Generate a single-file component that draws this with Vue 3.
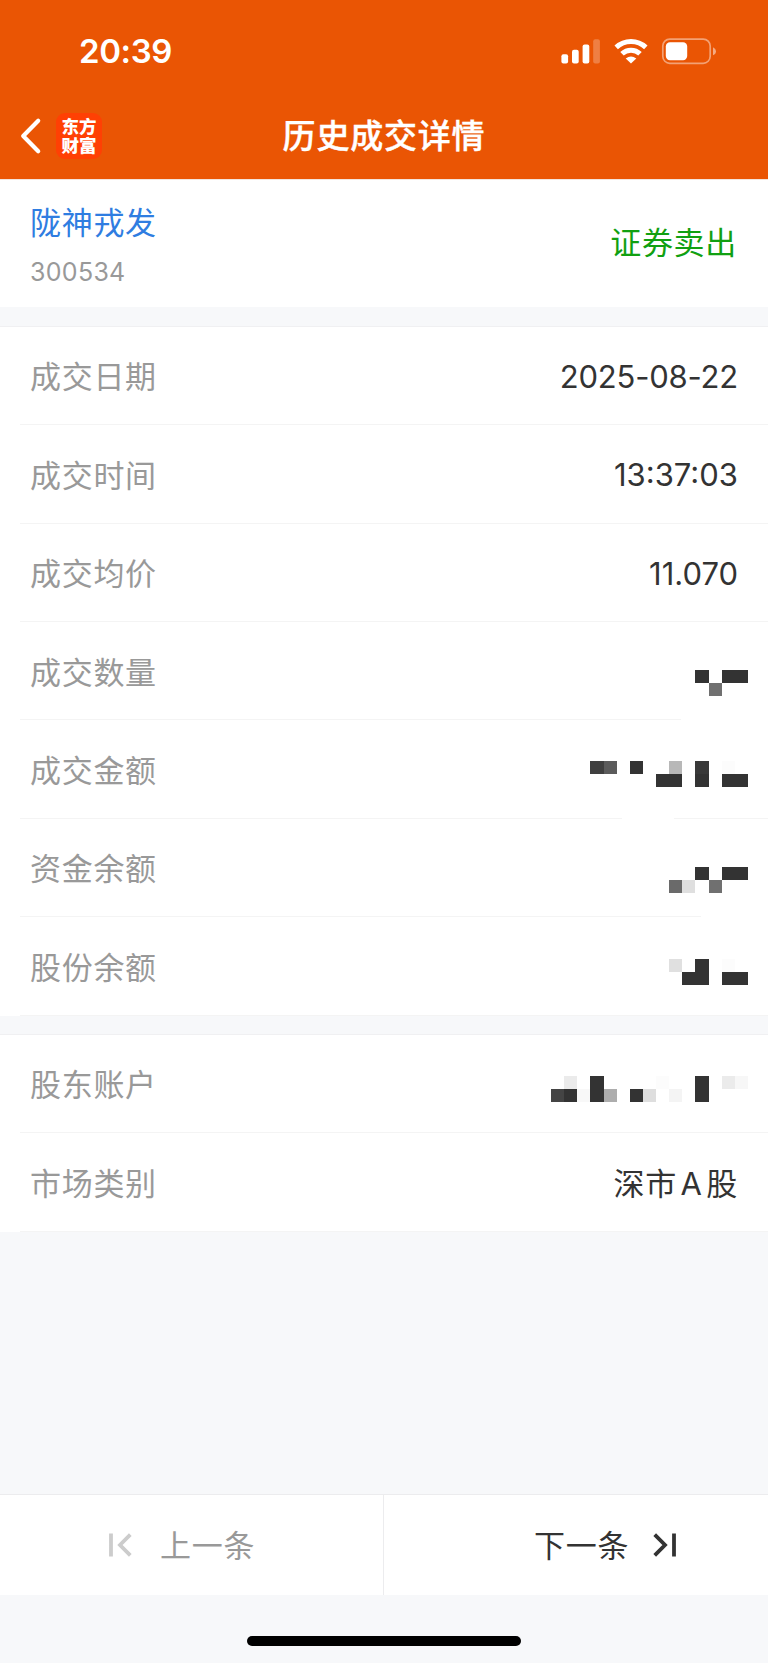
<template>
  <div class="page">
    <header class="header">
      <div class="status-bar">
        <span class="status-time">20:39</span>
        <svg class="status-icons" width="156" height="28" viewBox="0 0 156 28" fill="#fff">
          <rect x="1.4" y="17.3" width="6.7" height="9.2" rx="2" />
          <rect x="12" y="12.7" width="6.7" height="13.8" rx="2" />
          <rect x="22.6" y="7.4" width="6.7" height="19.1" rx="2" />
          <rect x="33.2" y="2.2" width="6.7" height="24.3" rx="2" opacity="0.25" />
          <g fill="none" stroke="#fff" stroke-width="5">
            <path d="M56.2 10.4 A21.6 21.6 0 0 1 85.8 10.4" />
            <path d="M62 16.8 A13 13 0 0 1 80 16.8" />
          </g>
          <path d="M71 26.6 L65.7 21.4 Q71 17.4 76.3 21.4 Z" />
          <rect x="102.8" y="2.1" width="47.4" height="24.2" rx="7" fill="none" stroke="#fff" stroke-width="1.7" opacity="0.45" />
          <rect x="105.8" y="5.2" width="21.4" height="18" rx="4.2" />
          <path d="M153 10.2 Q156 11.5 156 14.2 Q156 17 153 18.3 Z" opacity="0.5" />
        </svg>
      </div>
      <div class="nav-bar">
        <div class="nav-left">
          <svg class="back-icon" width="22" height="38" viewBox="0 0 22 38" fill="none" stroke="#fff" stroke-width="4.2" stroke-linecap="round" stroke-linejoin="round">
            <path d="M18.2 3.8 L3.2 19 L18.2 34.2" />
          </svg>
          <div class="logo"><span>东方</span><span>财富</span></div>
        </div>
        <h1 class="title">历史成交详情</h1>
      </div>
    </header>

    <section class="summary">
      <div class="stock">
        <span class="stock-name">陇神戎发</span>
        <span class="stock-code">300534</span>
      </div>
      <span class="direction">证券卖出</span>
    </section>

    <section v-for="(group, index) in groups" :key="index" class="group">
      <div v-for="row in group" :key="row.label" class="row" :class="row.line">
        <span class="label">{{ row.label }}</span>
        <span v-if="row.value" class="value" :class="row.type">{{ row.value }}</span>
        <svg
          v-else
          class="mosaic"
          :style="{ marginTop: row.offset + 'px' }"
          :width="CELL * 15"
          :height="CELL * 2"
          shape-rendering="crispEdges"
        >
          <rect
            v-for="([col, line, color], i) in row.cells"
            :key="i"
            :x="(14 - col) * CELL"
            :y="line * CELL"
            :width="CELL"
            :height="CELL"
            :fill="color"
          />
        </svg>
      </div>
    </section>

    <footer class="footer">
      <div class="pager">
        <button class="pager-btn prev" disabled>
          <svg width="24" height="24" viewBox="0 0 24 24" fill="none" stroke="#ccc" stroke-width="3.8">
            <path d="M3 0.5 V23.5 M22.3 1.7 L12 12 L22.3 22.3" />
          </svg>
          <span class="pager-text">上一条</span>
        </button>
        <button class="pager-btn next">
          <span class="pager-text">下一条</span>
          <svg width="24" height="24" viewBox="0 0 24 24" fill="none" stroke="#333" stroke-width="3.8">
            <path d="M21 0.5 V23.5 M1.7 1.7 L12 12 L1.7 22.3" />
          </svg>
        </button>
      </div>
      <div class="home-indicator"></div>
    </footer>
  </div>
</template>

<script setup>
// Size of one mosaic block
const CELL = 13.13

const DARK = '#333333'

// cells: [column counted from the right, line, color]
const groups = [
  [
    { label: '成交日期', value: '2025-08-22', type: 'date' },
    { label: '成交时间', value: '13:37:03', type: 'time' },
    { label: '成交均价', value: '11.070', type: 'price' },
    {
      label: '成交数量',
      line: 'cut-amount',
      offset: 47.4,
      cells: [[3, 0, DARK], [1, 0, DARK], [0, 0, DARK], [2, 1, '#707070']]
    },
    {
      label: '成交金额',
      line: 'cut-money',
      offset: 40.7,
      cells: [
        [11, 0, '#3f3f3f'], [10, 0, '#5b5b5b'], [8, 0, DARK], [5, 0, '#b8b8b8'],
        [3, 0, '#393939'], [1, 0, '#fcfcfc'], [6, 1, DARK], [5, 1, DARK],
        [3, 1, DARK], [1, 1, DARK], [0, 1, DARK]
      ]
    },
    {
      label: '资金余额',
      line: 'cut-balance',
      offset: 47.4,
      cells: [
        [3, 0, DARK], [1, 0, DARK], [0, 0, DARK],
        [5, 1, '#6a6a6a'], [4, 1, '#dfdfdf'], [2, 1, '#707070']
      ]
    },
    {
      label: '股份余额',
      offset: 41.1,
      cells: [
        [5, 0, '#e0e0e0'], [3, 0, DARK], [1, 0, '#fcfcfc'],
        [4, 1, DARK], [3, 1, DARK], [1, 1, DARK], [0, 1, DARK]
      ]
    }
  ],
  [
    {
      label: '股东账户',
      offset: 40.9,
      cells: [
        [13, 0, '#ebebeb'], [11, 0, DARK], [6, 0, '#fcfcfc'], [3, 0, DARK],
        [1, 0, '#ebebeb'], [0, 0, '#f7f7f7'], [14, 1, '#444444'], [13, 1, DARK],
        [12, 1, '#f8f8f8'], [11, 1, DARK], [10, 1, '#adadad'], [8, 1, DARK],
        [7, 1, '#dedede'], [5, 1, '#f4f4f4'], [3, 1, DARK]
      ]
    },
    { label: '市场类别', value: '深市 A 股', type: 'market' }
  ]
]
</script>

<style>
body {
  background: #f7f8fa;
}
</style>

<style scoped>
.page {
  display: flex;
  flex-direction: column;
  width: 768px;
  height: 1663px;
  overflow: hidden;
  background: #f7f8fa;
  font-family: Inter, 'Noto Sans CJK SC', sans-serif;
  color: #333;
  white-space: nowrap;
}

.header {
  display: flex;
  flex-direction: column;
  flex: none;
  height: 179px;
  background: #ea5504;
  color: #fff;
}

.status-bar {
  display: flex;
  align-items: center;
  justify-content: space-between;
  height: 102px;
  padding: 0 52px 0 79px;
}

.status-time {
  font-size: 33px;
  font-weight: 600;
  letter-spacing: -0.4px;
}

.nav-bar {
  display: grid;
  grid-template-columns: 1fr auto 1fr;
  align-items: center;
  height: 68px;
}

.nav-left {
  display: flex;
  align-items: center;
  gap: 14px;
  padding-left: 20px;
}

.logo {
  display: flex;
  flex-direction: column;
  justify-content: center;
  align-items: center;
  width: 46px;
  height: 46px;
  border-radius: 9px;
  background: #ff4004;
  font-size: 17.5px;
  font-weight: 900;
  line-height: 19px;
}

.title {
  margin: 0;
  font-size: 33px;
  font-weight: 500;
  letter-spacing: 0.8px;
  line-height: 48px;
  -webkit-text-stroke: 0.4px #fff;
}

.summary {
  display: flex;
  align-items: center;
  justify-content: space-between;
  box-sizing: border-box;
  flex: none;
  height: 128px;
  padding: 0 31px 0 30px;
  border-top: 1px solid #f3e4dc;
  background: #fff;
}

.stock {
  display: flex;
  flex-direction: column;
  padding-top: 8px;
}

.stock-name {
  color: #2f7de1;
  font-size: 31px;
  letter-spacing: 0.7px;
  line-height: 48px;
}

.stock-code {
  padding-top: 1px;
  color: #999;
  font-size: 25px;
  letter-spacing: 0.3px;
  line-height: 48px;
}

.direction {
  padding-bottom: 2px;
  color: #11a011;
  font-size: 31px;
  letter-spacing: 0.7px;
  line-height: 48px;
}

.group {
  flex: none;
  margin-top: 19px;
  border-top: 1px solid #f0f0f2;
  background: #fff;
}

.group + .group {
  margin-top: 18px;
}

.row {
  display: flex;
  align-items: center;
  justify-content: space-between;
  box-sizing: border-box;
  height: 98.45px;
  padding: 0 30px;
  background: linear-gradient(#f4f4f4, #f4f4f4) 20px 100% / 748px 1.3px no-repeat;
}

.row.cut-amount {
  background-size: 661px 1.3px;
}

.row.cut-money {
  background: linear-gradient(90deg, #f4f4f4 602px, #fff 602px, #fff 654px, #f4f4f4 654px) 20px 100% / 748px 1.3px no-repeat;
}

.row.cut-balance {
  background-size: 681px 1.3px;
}

.label {
  padding-bottom: 3px;
  color: #999;
  font-size: 31px;
  letter-spacing: 0.7px;
}

.value {
  font-size: 31px;
}

.date {
  letter-spacing: -0.2px;
}

.market {
  padding-bottom: 2px;
  letter-spacing: 0.7px;
  word-spacing: -5.8px;
}

.mosaic {
  align-self: flex-start;
  margin-right: -10.4px;
}

.footer {
  display: flex;
  flex-direction: column;
  align-items: center;
  flex: none;
  height: 169px;
  margin-top: auto;
}

.pager {
  display: flex;
  box-sizing: border-box;
  width: 100%;
  height: 101px;
  border-top: 1px solid #ececee;
  background: #fff;
}

.pager-btn {
  display: flex;
  align-items: center;
  box-sizing: border-box;
  width: 384px;
  padding: 0;
  border: none;
  background: none;
  font-family: inherit;
  font-size: 31px;
  letter-spacing: 0.7px;
}

.pager-text {
  padding-bottom: 3px;
}

.prev {
  gap: 28px;
  padding-left: 108px;
  border-right: 1px solid #ececee;
  color: #999;
}

.next {
  gap: 24px;
  padding-left: 150px;
  color: #333;
}

.home-indicator {
  width: 274px;
  height: 10px;
  margin-top: 41px;
  border-radius: 5px;
  background: #000;
}
</style>
